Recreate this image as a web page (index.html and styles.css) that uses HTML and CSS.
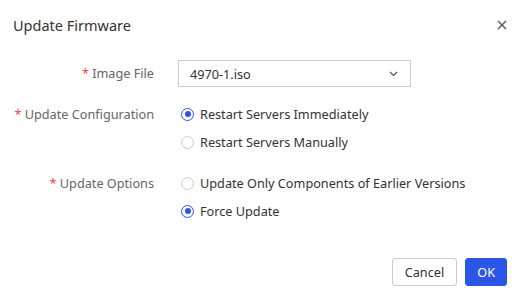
FILE: index.html
```html
<!DOCTYPE html>
<html>

<head>
    <title>Update Firmware</title>
    <link rel="stylesheet" href="styles.css">
</head>

<body>
    <div class="dialog">
        <div class="header">
            <span class="title">Update Firmware</span>
            <span class="close">
                <svg width="10" height="10" viewBox="0 0 10 10">
                    <path d="M1 1L9 9M9 1L1 9" stroke="#555" stroke-width="1.4" fill="none" />
                </svg>
            </span>
        </div>

        <div class="form">
            <div class="row">
                <div class="label"><span class="req">*</span> Image File</div>
                <div class="control">
                    <div class="select">
                        <span>4970-1.iso</span>
                        <svg width="9" height="6" viewBox="0 0 9 6">
                            <path d="M1 1L4.5 4.5L8 1" stroke="#555" stroke-width="1.2" fill="none" />
                        </svg>
                    </div>
                </div>
            </div>

            <div class="row">
                <div class="label"><span class="req">*</span> Update Configuration</div>
                <div class="control">
                    <div class="radio"><span class="dot checked"></span>Restart Servers Immediately</div>
                    <div class="radio"><span class="dot"></span>Restart Servers Manually</div>
                </div>
            </div>

            <div class="row">
                <div class="label"><span class="req">*</span> Update Options</div>
                <div class="control">
                    <div class="radio"><span class="dot"></span>Update Only Components of Earlier Versions</div>
                    <div class="radio"><span class="dot checked"></span>Force Update</div>
                </div>
            </div>
        </div>

        <div class="footer">
            <button class="btn">Cancel</button>
            <button class="btn primary">OK</button>
        </div>
    </div>
</body>

</html>
```

FILE: styles.css
```css
body {
    margin: 0;
    font-family: "Noto Sans", "Open Sans", sans-serif;
    font-size: 12.7px;
    color: #333;
    background: #fff;
}

.dialog {
    width: 526px;
    height: 294px;
    display: flex;
    flex-direction: column;
}

.header {
    height: 50px;
    padding: 0 19px 0 13px;
    display: flex;
    justify-content: space-between;
    align-items: center;
}

.title {
    font-size: 14.5px;
    color: #333;
}

.close {
    display: flex;
}

.form {
    padding-top: 10px;
}

.row {
    display: grid;
    grid-template-columns: 154px 1fr;
    column-gap: 24px;
    margin-bottom: 13px;
}

.label {
    text-align: right;
    color: #666;
    line-height: 28px;
}

.row:first-child .label {
    line-height: 27px;
}

.req {
    color: #e5483f;
}

.select {
    width: 233px;
    height: 27px;
    box-sizing: border-box;
    border: 1px solid #ccc;
    display: flex;
    align-items: center;
    justify-content: space-between;
    padding: 0 12px 0 11px;
}

.radio {
    height: 28px;
    display: flex;
    align-items: center;
    padding-left: 3px;
}

.dot {
    width: 13px;
    height: 13px;
    box-sizing: border-box;
    border: 1px solid #ccc;
    border-radius: 50%;
    margin-right: 6px;
    position: relative;
}

.dot.checked {
    border-color: #2a55e5;
}

.dot.checked::after {
    content: "";
    position: absolute;
    left: 2.5px;
    top: 2.5px;
    width: 6px;
    height: 6px;
    border-radius: 50%;
    background: #2a55e5;
}

.footer {
    margin-top: auto;
    padding: 0 19px 8px 0;
    display: flex;
    justify-content: flex-end;
    gap: 8px;
}

.btn {
    height: 28px;
    padding: 0 12px;
    font-family: inherit;
    font-size: 12.7px;
    color: #333;
    background: #fff;
    border: 1px solid #ccc;
    border-radius: 3px;
}

.btn.primary {
    background: #2a55e5;
    border-color: #2a55e5;
    color: #fff;
    padding: 0 11px;
}
```
